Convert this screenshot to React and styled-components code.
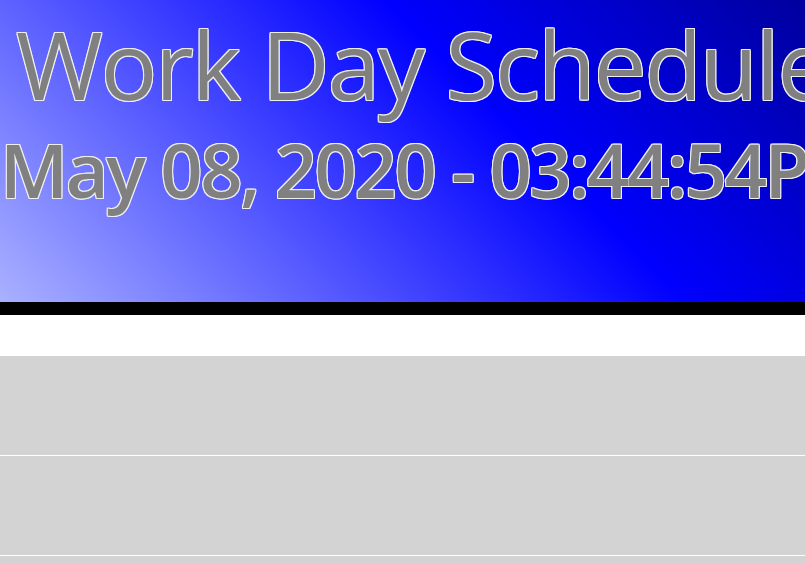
import styled, { createGlobalStyle } from 'styled-components';

const GlobalStyle = createGlobalStyle`
    body {
        margin: 0;
        font-family: "Open Sans", "Noto Sans", sans-serif;
        background: #fff;
        overflow: hidden;
    }
`;

const hours = ['9AM', '10AM', '11AM'];

const App = () => {
    return (
        <Page>
            <GlobalStyle />
            <Header>
                <Title>Work Day Schedule</Title>
                <DateLine>May 08, 2020 - 03:44:54PM</DateLine>
            </Header>
            <Schedule>
                {
                    hours.map((h) => (
                        <Row key={h} />
                    ))
                }
            </Schedule>
        </Page>
    );
};

export default App;

const Page = styled.div`
    width: 805px;
    height: 564px;
    overflow: hidden;
`;

const Header = styled.header`
    height: 302px;
    border-bottom: solid 13px #000;
    background: linear-gradient(45deg, #a9b1ff 0%, #0000ff 62%, #00009e 100%);
    white-space: nowrap;
    overflow: hidden;
    color: gray;
    text-shadow: -1px -1px 0 #eee, 1px -1px 0 #eee, -1px 1px 0 #eee, 1px 1px 0 #eee,
        0 -1px 0 #eee, 0 1px 0 #eee, -1px 0 0 #eee, 1px 0 0 #eee;
`;

const Title = styled.h1`
    margin: 0;
    padding-left: 16px;
    font-size: 94px;
    font-weight: 400;
    letter-spacing: -2px;
    line-height: normal;
`;

const DateLine = styled.p`
    margin: 0;
    font-size: 74px;
    font-weight: 600;
    letter-spacing: -2.4px;
    line-height: 84px;
`;

const Schedule = styled.section`
    margin-top: 41px;
`;

const Row = styled.div`
    height: 99px;
    background-color: lightgray;
    border-bottom: solid 1px #fff;
`;
